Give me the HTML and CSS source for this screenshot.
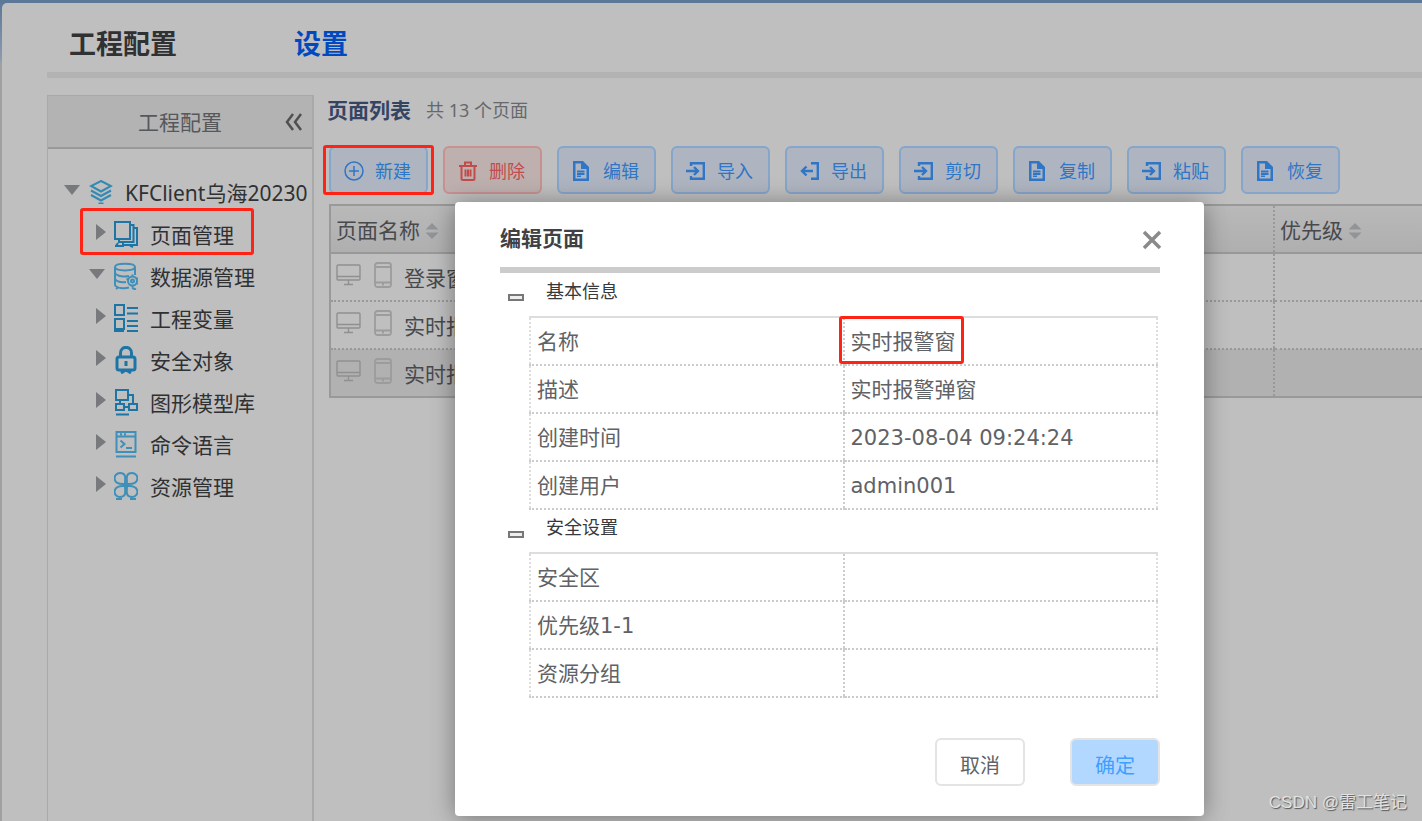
FILE: index.html
```html
<!DOCTYPE html>
<html lang="zh-CN">
<head>
<meta charset="utf-8">
<title>工程配置</title>
<link rel="stylesheet" href="styles.css">
</head>
<body>
<svg class="defs" aria-hidden="true">
  <symbol id="i-doc" viewBox="0 0 20 20"><path fill="currentColor" fill-rule="evenodd" d="M1 0h10l6 6v14H1zM3.500 2.500v15h11V8H9V2.500zM5 9.500h7.500v2H5zM5 12h7.500v2H5zM5 14.500h4v1.500H5z"/></symbol>
  <symbol id="i-in" viewBox="0 0 20 20"><g fill="none" stroke="currentColor" stroke-width="2.400"><path d="M5 5V2.200h12.800v15.600H5V15"/><path d="M0 10h11M8 6l4 4-4 4"/></g></symbol>
  <symbol id="i-out" viewBox="0 0 20 20"><g fill="none" stroke="currentColor" stroke-width="2.400"><path d="M11 2.200h6.800v15.600H11"/><path d="M13 10H2M6.500 5.500L2 10l4.500 4.500"/></g></symbol>
  <symbol id="i-pc" viewBox="0 0 26 24"><g fill="none" stroke="currentColor" stroke-width="1.400"><rect x="1" y="2" width="23" height="15" rx="1"/><path d="M1 13.500h23M12.500 17v4M8 21.500h9"/></g></symbol>
  <symbol id="i-phone" viewBox="0 0 18 26"><g fill="none" stroke="currentColor" stroke-width="1.800"><rect x="1" y="1" width="16" height="24" rx="2.500"/><path d="M1 5h16M1 20.500h16M9 21.500v2"/></g></symbol>
  <symbol id="i-sort" viewBox="0 0 14 18"><path fill="currentColor" d="M7 1l6.500 6.500H.5zM7 17L.5 10.500h13z"/></symbol>
</svg>

<main class="window">
  <header class="top">
    <h1 class="top-title">工程配置</h1>
    <a class="top-link" href="#settings">设置</a>
  </header>

  <div class="columns">
    <nav class="side" aria-label="工程配置">
      <div class="side-head">
        <h2 class="side-title">工程配置</h2>
        <button class="collapse" type="button" aria-label="收起">
          <svg width="18" height="18" viewBox="0 0 18 18" fill="none" stroke="currentColor" stroke-width="2.500"><path d="M8 1L2 9l6 8M16 1l-6 8 6 8"/></svg>
        </button>
      </div>
      <ul class="tree">
        <li class="node root"><button class="arrow open" type="button" aria-label="折叠"></button>
          <svg class="node-icon" viewBox="0 0 24 24"><path d="M12 1l10 5-10 5.500L2 6zM2 10.500L12 16l10-5.500M2 15l10 5.500L22 15M9.500 23.500h5"/></svg><a href="#project">KFClient乌海20230</a></li>
        <li class="node"><button class="arrow" type="button" aria-label="展开"></button>
          <svg class="node-icon" viewBox="0 0 24 28"><path d="M1 2h15v17H1zM16 5h3.500v17H5v-3M19.500 8H23v17H9v-3M1 26h9M4 23l-2 3M16 25.500l3 1.500"/></svg><a href="#pages">页面管理</a><span class="mark mark-node"></span></li>
        <li class="node"><button class="arrow open" type="button" aria-label="折叠"></button>
          <svg class="node-icon soft" viewBox="0 0 24 28"><path d="M1 5c0-4.500 20-4.500 20 0s-20 4.500-20 0v18c1 3 9 4 14 2.500M21 5v8M1 11c2 3.500 10 4 14 3M1 17c2 3 7 3.500 11 3M2 27l3-2M18 26l4 1.500"/><circle cx="18.500" cy="19" r="4.500"/><circle cx="18.500" cy="19" r="1.500"/><path d="M18.500 12.500v2M18.500 23.500v2M12.500 17l2 .5M22.500 17l1.500-1M22.500 21l1.500 1"/></svg><a href="#sources">数据源管理</a></li>
        <li class="node"><button class="arrow" type="button" aria-label="展开"></button>
          <svg class="node-icon" viewBox="0 0 24 28"><path d="M1 1h9v10H1zM1 15h9v10H1zM13 4h11M13 9.500h11M13 17h11M13 22h11M0 27h10M13 27h11"/></svg><a href="#vars">工程变量</a></li>
        <li class="node"><button class="arrow" type="button" aria-label="展开"></button>
          <svg class="node-icon bold" viewBox="0 0 24 28"><rect x="3" y="11" width="18" height="13" rx="2"/><path d="M6.500 11V7c0-7.500 11-7.500 11 0v4M12 15v5M7 27l4-2.500h2l4 2.500"/></svg><a href="#security">安全对象</a></li>
        <li class="node"><button class="arrow" type="button" aria-label="展开"></button>
          <svg class="node-icon" viewBox="0 0 24 28"><path d="M2 2h12v10H2zM2 16h8v6H2zM15 16h8v6h-8zM10 19h5M14 7h5v9M6 12v4M2 26.500h13"/></svg><a href="#models">图形模型库</a></li>
        <li class="node"><button class="arrow" type="button" aria-label="展开"></button>
          <svg class="node-icon soft" viewBox="0 0 24 28"><path d="M2.500 2h19v20h-19zM2.500 6.500h19M6 4.200h2M10 4.200h2M6.500 10.500l4 3.500-4 3.500M12 18h6M2 26.500h20"/></svg><a href="#commands">命令语言</a></li>
        <li class="node"><button class="arrow" type="button" aria-label="展开"></button>
          <svg class="node-icon soft" viewBox="0 0 24 28"><path d="M11 12C-3 13-1 1 6 1s5 6 5 11zM13 12C27 13 25 1 18 1s-5 6-5 11zM11 14C-3 13-1 25 6 25s5-6 5-11zM13 14c14-1 12 11 5 11s-5-6-5-11zM12 9v9M2 27h6M16 27h6"/></svg><a href="#resources">资源管理</a></li>
      </ul>
    </nav>

    <section class="content">
      <div class="content-head">
        <h2 class="list-title">页面列表</h2>
        <span class="list-count">共 13 个页面</span>
      </div>
      <div class="toolbar">
        <button class="tool" type="button"><svg class="tool-icon" viewBox="0 0 20 20" fill="none" stroke="currentColor" stroke-width="1.500"><circle cx="10" cy="10" r="9"/><path d="M10 5v10M5 10h10"/></svg>新建<span class="mark mark-tool"></span></button>
        <button class="tool danger" type="button"><svg class="tool-icon" viewBox="0 0 20 20" fill="none" stroke="currentColor" stroke-width="2"><path d="M1 5h18M7 4V1.500h6V4M3.500 6v11.500c0 1 .5 1.500 1.500 1.500h10c1 0 1.500-.5 1.500-1.500V6M7.500 8.500v7M10 8.500v7M12.500 8.500v7"/></svg>删除</button>
        <button class="tool" type="button"><svg class="tool-icon"><use href="#i-doc"/></svg>编辑</button>
        <button class="tool" type="button"><svg class="tool-icon"><use href="#i-in"/></svg>导入</button>
        <button class="tool" type="button"><svg class="tool-icon"><use href="#i-out"/></svg>导出</button>
        <button class="tool" type="button"><svg class="tool-icon"><use href="#i-in"/></svg>剪切</button>
        <button class="tool" type="button"><svg class="tool-icon"><use href="#i-doc"/></svg>复制</button>
        <button class="tool" type="button"><svg class="tool-icon"><use href="#i-in"/></svg>粘贴</button>
        <button class="tool" type="button"><svg class="tool-icon"><use href="#i-doc"/></svg>恢复</button>
      </div>
      <table class="pages">
        <thead>
          <tr><th scope="col">页面名称<svg class="sort"><use href="#i-sort"/></svg></th><th class="priority" scope="col">优先级<svg class="sort"><use href="#i-sort"/></svg></th></tr>
        </thead>
        <tbody>
          <tr><td><span class="cell"><svg class="pc"><use href="#i-pc"/></svg><svg class="phone"><use href="#i-phone"/></svg>登录窗</span></td><td></td></tr>
          <tr><td><span class="cell"><svg class="pc"><use href="#i-pc"/></svg><svg class="phone"><use href="#i-phone"/></svg>实时报</span></td><td></td></tr>
          <tr class="selected"><td><span class="cell"><svg class="pc"><use href="#i-pc"/></svg><svg class="phone"><use href="#i-phone"/></svg>实时报</span></td><td></td></tr>
        </tbody>
      </table>
    </section>
  </div>
</main>

<div class="dialog" role="dialog" aria-labelledby="dialog-title">
  <header class="dialog-head">
    <h2 class="dialog-title" id="dialog-title">编辑页面</h2>
    <button class="close" type="button" aria-label="关闭"><svg width="20" height="20" viewBox="0 0 20 20" fill="none" stroke="currentColor" stroke-width="3.500"><path d="M2 2l16 16M18 2L2 18"/></svg></button>
  </header>
  <h3 class="group"><button class="fold" type="button" aria-label="折叠基本信息"></button>基本信息</h3>
  <table class="props">
    <tbody>
      <tr><th scope="row">名称</th><td>实时报警窗<span class="mark mark-cell"></span></td></tr>
      <tr><th scope="row">描述</th><td>实时报警弹窗</td></tr>
      <tr><th scope="row">创建时间</th><td>2023-08-04 09:24:24</td></tr>
      <tr><th scope="row">创建用户</th><td>admin001</td></tr>
    </tbody>
  </table>
  <h3 class="group"><button class="fold" type="button" aria-label="折叠安全设置"></button>安全设置</h3>
  <table class="props">
    <tbody>
      <tr><th scope="row">安全区</th><td></td></tr>
      <tr><th scope="row">优先级1-1</th><td></td></tr>
      <tr><th scope="row">资源分组</th><td></td></tr>
    </tbody>
  </table>
  <footer class="actions">
    <button class="action" type="button">取消</button>
    <button class="action primary" type="button">确定</button>
  </footer>
</div>
<p class="watermark">CSDN @雷工笔记</p>
</body>
</html>
```

FILE: styles.css
```css
* { box-sizing: border-box; }

body {
  margin: 0;
  min-height: 100vh;
  padding: 3px 0 0 2px;
  display: flex;
  position: relative;
  overflow: hidden;
  background: linear-gradient(#5c7899 3px, #8d9bad 60px, #a0a0a0 64px);
  color: #303133;
  font-family: "Noto Sans", "Noto Sans CJK SC", sans-serif;
  font-size: 21px;
  line-height: 30px;
}

h1, h2, h3, p, ul { margin: 0; padding: 0; }
button { font: inherit; color: inherit; cursor: pointer; }
a { color: inherit; text-decoration: none; }
.defs { position: absolute; width: 0; height: 0; }

.window {
  flex: 1;
  min-width: 0;
  display: flex;
  flex-direction: column;
  padding-left: 45px;
  background: #bfbfbf;
  border-top-left-radius: 5px;
}

.top {
  display: flex;
  align-items: center;
  gap: 117px;
  height: 75px;
  padding: 12px 22px 0;
  border-bottom: 6px solid #b3b3b3;
  font-size: 27px;
  line-height: 40px;
}
.top-title { font-size: 27px; font-weight: 700; }
.top-link { font-weight: 700; color: #0049bf; }

.columns { flex: 1; display: flex; gap: 15px; padding-top: 17px; }

.side {
  flex: 0 0 267px;
  border: 1px solid #a9a9a9;
  border-right-width: 2px;
  border-bottom: 0;
  overflow: hidden;
}
.side-head {
  display: flex;
  align-items: center;
  justify-content: space-between;
  height: 53px;
  padding: 0 9px 0 90px;
  background: #b3b3b3;
  border-bottom: 2px solid #999;
}
.side-title { font-size: 21px; font-weight: 400; color: #56585c; }
.collapse { display: flex; padding: 0; border: 0; background: none; color: #505050; }

.tree { list-style: none; padding-top: 22px; }
.node {
  position: relative;
  display: flex;
  align-items: center;
  height: 42px;
  padding-left: 48px;
  white-space: nowrap;
}
.root { padding-left: 23px; }
.node a { padding-top: 2px; }
.arrow {
  width: 10px;
  height: 16px;
  margin: 0 8px 4px 0;
  padding: 0;
  border: 0;
  background: #77797c;
  clip-path: polygon(0 0, 100% 50%, 0 100%);
}
.arrow.open {
  width: 16px;
  height: 10px;
  margin: 0 9px 4px -7px;
  clip-path: polygon(0 0, 100% 0, 50% 100%);
}
.node-icon {
  width: 24px;
  height: 28px;
  margin-right: 12px;
  fill: none;
  stroke: #1d75a5;
  stroke-width: 2;
}
.root .node-icon { stroke: #338ab4; height: 24px; }
.node-icon.bold { stroke-width: 3; }
.node-icon.soft { stroke: #408fb8; }

.mark {
  position: absolute;
  border: 3px solid #ff2315;
  border-radius: 3px;
  pointer-events: none;
}
.mark-node { left: 32px; top: -5px; width: 174px; height: 47px; }
.mark-tool { inset: -3px -8px -3px -8px; }
.mark-cell { left: -6px; top: -2px; width: 125px; height: 48px; }

.content { flex: 1; min-width: 0; }
.content-head { display: flex; align-items: center; gap: 15px; height: 30px; margin-left: -2px; }
.list-title { font-size: 21px; font-weight: 700; color: #364464; }
.list-count { font-size: 18px; color: #66686c; }

.toolbar { display: flex; gap: 15px; margin-top: 21px; }
.tool {
  position: relative;
  display: flex;
  flex: 0 0 99px;
  align-items: center;
  justify-content: center;
  gap: 11px;
  height: 48px;
  padding: 2px 2px 0 0;
  border: 2px solid #86a5cb;
  border-radius: 6px;
  background: #aeb5c0;
  color: #2f76c6;
  font-size: 18px;
}
.tool.danger { border-color: #c99090; background: #bfb0b0; color: #c24c4c; }
.tool-icon { width: 20px; height: 20px; margin-bottom: 1px; }

.pages {
  width: 100%;
  margin-top: 10px;
  table-layout: fixed;
  border-collapse: collapse;
  border: 2px solid #999;
  border-right: 0;
  color: #47494d;
}
.pages th, .pages td { height: 48px; padding: 2px 5px 0; text-align: left; font-weight: 400; }
.pages th { border-bottom: 2px solid #999; background: linear-gradient(#b9b9b9, #afafaf); }
.pages td { border-bottom: 2px dotted #999; }
.pages .priority { width: 148px; }
.pages th + th, .pages td + td { border-left: 2px dotted #999; }
.selected { background: #b1b1b1; }
.sort { width: 14px; height: 18px; margin-left: 5px; vertical-align: -2px; color: #929497; }
.cell { display: flex; align-items: center; }
.pc { width: 26px; height: 24px; margin: 0 12px 6px 0; color: #909090; }
.phone { width: 18px; height: 26px; margin: 0 12px 6px 0; color: #9c9c9c; }

.dialog {
  position: absolute;
  left: 455px;
  top: 202px;
  width: 749px;
  padding: 0 44px 30px 45px;
  border-radius: 4px;
  background: #fff;
  box-shadow: 0 2px 24px rgba(0, 0, 0, .38);
  color: #606266;
  font-family: "DejaVu Sans", "Noto Sans CJK SC", sans-serif;
}
.dialog-head {
  display: flex;
  align-items: center;
  justify-content: space-between;
  height: 71px;
  padding-top: 9px;
  border-bottom: 6px solid #ccc;
}
.dialog-title { font-size: 21px; font-weight: 700; color: #3f4144; }
.close { display: flex; padding: 2px 0 0; border: 0; margin-right: -2px; background: none; color: #8a8a8a; }

.group {
  display: flex;
  align-items: center;
  gap: 22px;
  height: 43px;
  padding: 0 0 6px 8px;
  font-size: 18px;
  font-weight: 400;
  color: #37393c;
}
.props + .group { height: 42px; }
.fold { width: 16px; height: 7px; margin-top: 12px; padding: 0; border: 2px solid #777; background: #eee; }

.props {
  width: calc(100% - 31px);
  margin-left: 29px;
  table-layout: fixed;
  border-collapse: collapse;
  border: 2px dotted #ddd;
}
.props tr:first-child > * { border-top: 2px solid #ddd; }
.props th, .props td {
  position: relative;
  height: 48px;
  padding: 2px 6px 0;
  border-bottom: 2px dotted #ccc;
  text-align: left;
  font-weight: 400;
}
.props td { border-left: 2px dotted #ccc; }

.actions { display: flex; justify-content: flex-end; gap: 45px; padding-top: 40px; }
.action {
  width: 90px;
  height: 48px;
  padding: 8px 0 0;
  border: 2px solid #e4e4e4;
  border-radius: 6px;
  background: #fff;
  font-size: 20px;
}
.action.primary { background: #b3d8ff; color: #409eff; }

.watermark {
  position: absolute;
  right: 15px;
  bottom: 3px;
  font-size: 17px;
  color: #e2e2e2;
  text-shadow: 1px 1px 1px #555;
  font-family: "Liberation Sans", "Noto Sans CJK SC", sans-serif;
}
```
